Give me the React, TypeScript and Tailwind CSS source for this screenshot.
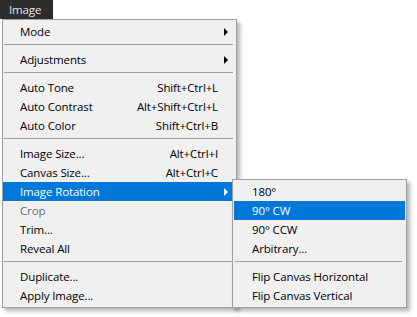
import React from "react";

type Item =
  | { sep: true }
  | { label: string; shortcut?: string; sub?: boolean; active?: boolean; disabled?: boolean };

const mainItems: Item[] = [
  { label: "Mode", sub: true },
  { sep: true },
  { label: "Adjustments", sub: true },
  { sep: true },
  { label: "Auto Tone", shortcut: "Shift+Ctrl+L" },
  { label: "Auto Contrast", shortcut: "Alt+Shift+Ctrl+L" },
  { label: "Auto Color", shortcut: "Shift+Ctrl+B" },
  { sep: true },
  { label: "Image Size...", shortcut: "Alt+Ctrl+I" },
  { label: "Canvas Size...", shortcut: "Alt+Ctrl+C" },
  { label: "Image Rotation", sub: true, active: true },
  { label: "Crop", disabled: true },
  { label: "Trim..." },
  { label: "Reveal All" },
  { sep: true },
  { label: "Duplicate..." },
  { label: "Apply Image..." },
];

const subItems: Item[] = [
  { label: "180°" },
  { label: "90° CW", active: true },
  { label: "90° CCW" },
  { label: "Arbitrary..." },
  { sep: true },
  { label: "Flip Canvas Horizontal" },
  { label: "Flip Canvas Vertical" },
];

function Row({ item, pl, pr }: { item: Item; pl: string; pr: string }) {
  if ("sep" in item) {
    return (
      <div className="h-[9px] pt-[3px]">
        <div className="h-px bg-[#a0a0a0] ml-[1px] mr-[3px]" />
      </div>
    );
  }
  const color = item.active ? "text-white" : item.disabled ? "text-[#6d6d6d]" : "text-black";
  return (
    <div
      className={`relative flex h-[19px] items-center justify-between pt-[1px] leading-[18px] ${pl} ${pr} ${
        item.active ? "bg-[#0078d7]" : ""
      } ${color}`}
    >
      <span>{item.label}</span>
      {item.shortcut && <span>{item.shortcut}</span>}
      {item.sub && (
        <span
          className={`absolute right-[8px] top-[6px] h-0 w-0 border-y-[4px] border-y-transparent border-l-[4px] ${
            item.active ? "border-l-white" : "border-l-black"
          }`}
        />
      )}
    </div>
  );
}

export default function App() {
  return (
    <div className="relative h-[317px] w-[417px] overflow-hidden bg-white font-['Segoe_UI','Open_Sans',sans-serif] text-[11.5px] tracking-[-0.13px]">
      <div className="h-[19px] w-[53px] bg-[#2e2e2e] pl-[9px] pt-[1px] leading-[18px] text-[#e4e4e4]">Image</div>
      <div className="ml-[2px] w-[235px] border border-[#a0a0a0] bg-[#f0f0f0] py-[2px] shadow-[3px_3px_4px_rgba(0,0,0,0.3)]">
        {mainItems.map((it, i) => (
          <Row key={i} item={it} pl="pl-[17px]" pr="pr-[18px]" />
        ))}
      </div>
      <div className="absolute left-[232px] top-[179px] w-[175px] border border-[#a0a0a0] bg-[#f0f0f0] px-[1px] py-[2px] shadow-[3px_3px_4px_rgba(0,0,0,0.3)]">
        {subItems.map((it, i) => (
          <Row key={i} item={it} pl="pl-[18px]" pr="pr-[8px]" />
        ))}
      </div>
    </div>
  );
}
